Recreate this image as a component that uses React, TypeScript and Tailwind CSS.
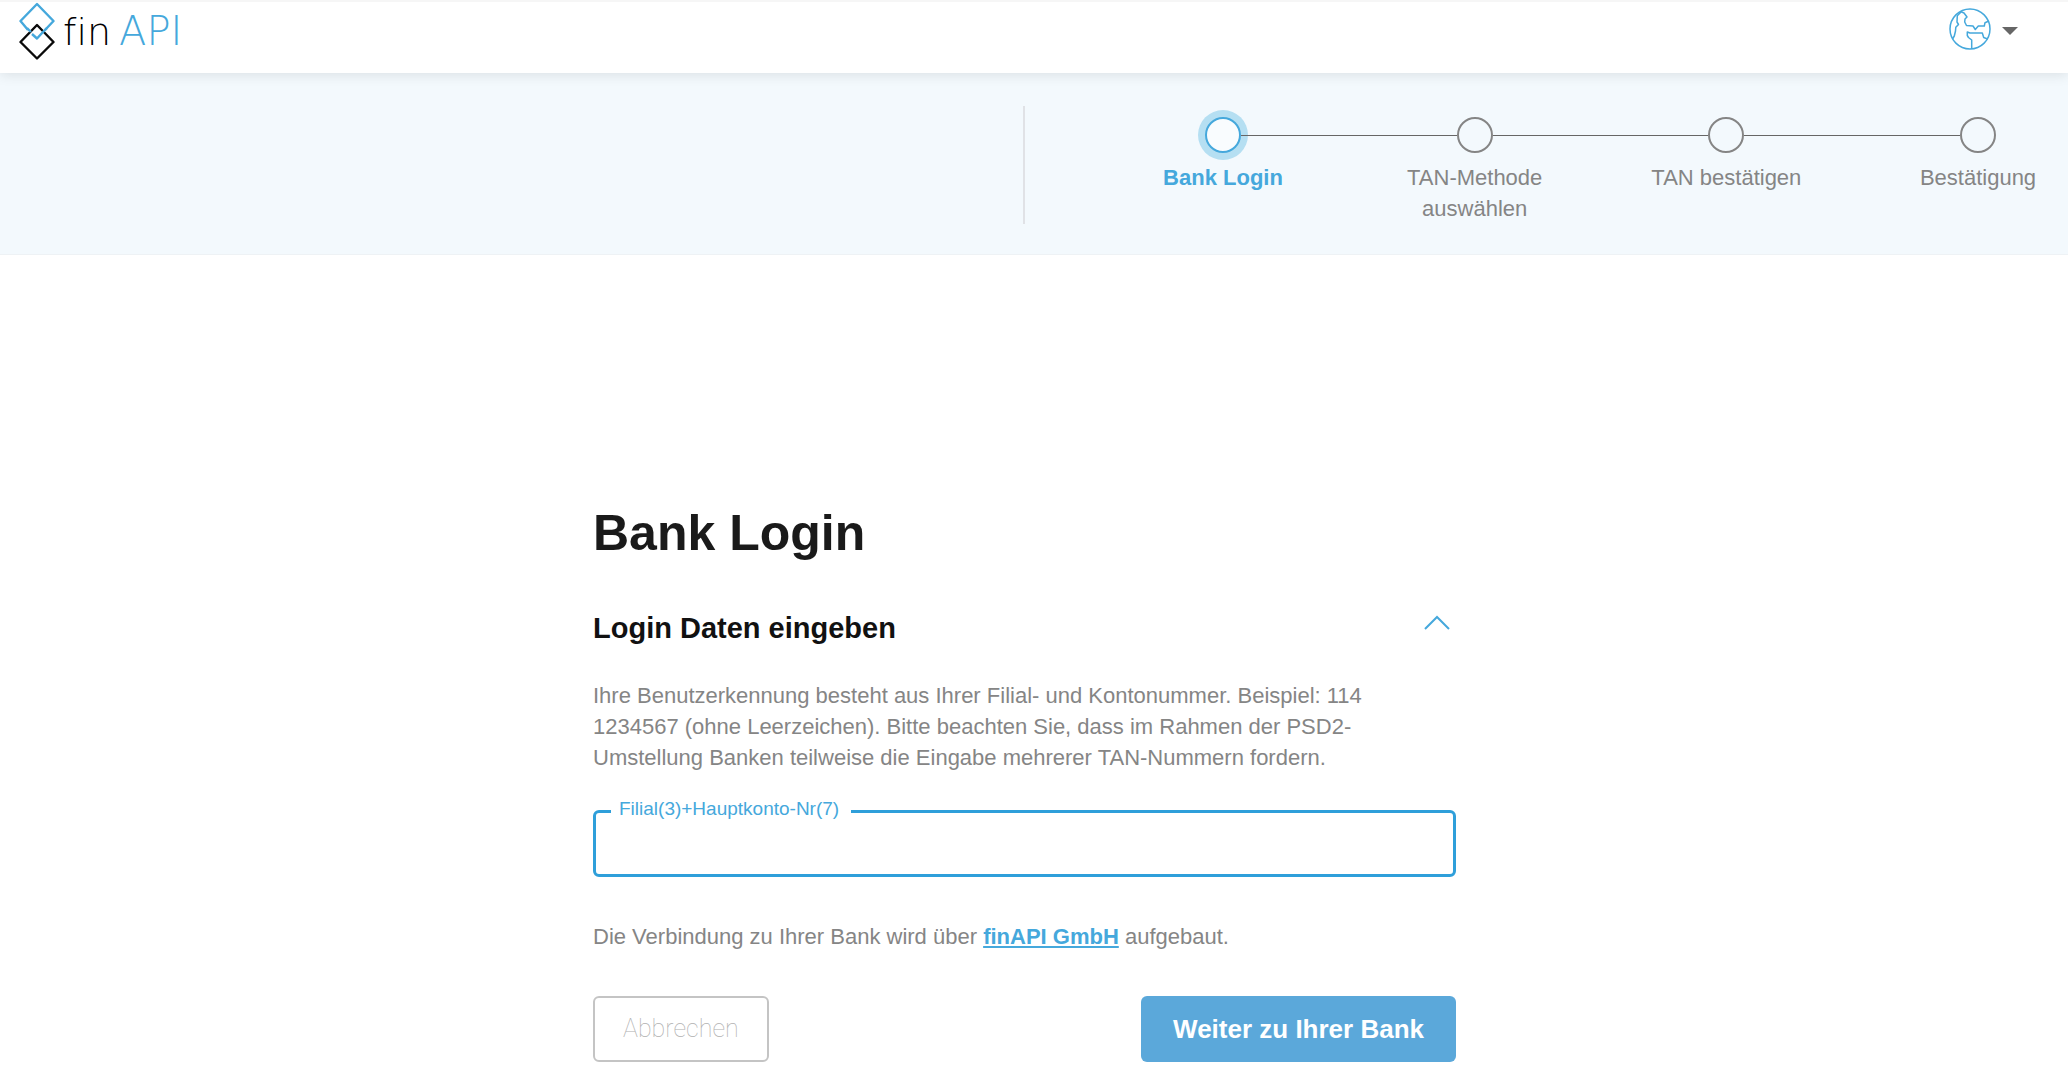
import React, { useState } from "react";

const steps = [
  { id: "login", label: "Bank Login" },
  { id: "method", label: "TAN-Methode auswählen" },
  { id: "tan", label: "TAN bestätigen" },
  { id: "confirm", label: "Bestätigung" },
];

function Logo() {
  return (
    <a href="#" className="flex items-center gap-2" aria-label="finAPI">
      <svg viewBox="0 0 36 58" fill="none" strokeWidth="2.4" strokeLinejoin="round" className="h-[58px] w-9">
        <path d="M9 28L1.5 19L18 2L34.5 19L26 28" stroke="#45a8dc" />
        <path d="M18 23L34.5 40L18 56.5L1.5 40Z" stroke="#0a0a0a" />
        <path d="M8 26L12 30M13 32L18 36.5L24 30L28 26" stroke="#45a8dc" />
      </svg>
      <span className="flex items-baseline gap-2 font-['DejaVu_Sans',sans-serif] leading-[48px] font-extralight [font-variant-ligatures:none]">
        <span className="text-[38px] text-black">fin</span>
        <span className="text-[40px] text-[#45a8dc]">API</span>
      </span>
    </a>
  );
}

function Globe() {
  return (
    <svg viewBox="0 0 42 42" fill="none" stroke="#45a8dc" strokeWidth="1.5" strokeLinejoin="round" className="size-[42px]">
      <circle cx="21" cy="21" r="20" />
      <path d="M11.5 3.5L15 5L18 9L16 11L15.7 14L17.5 17.5L24 18L26.3 21.5L29.3 18L35.3 18L36 14.7L39.3 13.3" />
      <path d="M12 4L8.3 7.7L8 14L9.5 16.5L6.8 19.3L6.5 23L5.3 28L3.5 31" />
      <path d="M22.7 41V32L19.5 29.5L18.3 27.5V24L21 25H33.3L34.7 29.5L38.5 31" />
    </svg>
  );
}

function Header() {
  return (
    <header className="relative z-10 flex h-[73px] items-start justify-between border-t-2 border-[#f6f6f6] bg-white pr-[50px] pl-[19px] shadow-[0_2px_12px_rgba(0,0,0,0.1)]">
      <Logo />
      <button type="button" aria-label="Sprache" className="mt-[6px] flex items-center gap-[11px]">
        <Globe />
        <span className="mt-1 border-x-8 border-t-8 border-x-transparent border-t-[#666666]" />
      </button>
    </header>
  );
}

function Stepper() {
  return (
    <div className="grid h-[182px] grid-cols-[1023fr_1045fr] border-b border-[#eef2f5] bg-[#f3f9fd] pt-[33px] pb-[33px]">
      <div />
      <ol className="flex items-start border-l-2 border-[#e0e2e6] pt-[11px] pr-[72px] pl-[180px]">
        {steps.map((step, i) => {
          const isActive = i === 0;
          return (
            <React.Fragment key={step.id}>
              {i > 0 && <li aria-hidden="true" className="mt-[18px] h-px flex-1 bg-[#666666]" />}
              <li className="flex w-9 flex-col items-center" aria-current={isActive ? "step" : undefined}>
                <span
                  className={`size-9 rounded-full border-2 ${isActive ? "border-[#45a8dc] bg-[#f9fcfe] ring-[7px] ring-[#b5dff2]" : "border-[#858585]"}`}
                />
                <span
                  className={`mt-[9px] w-[160px] text-center text-[22px] leading-[31px] ${isActive ? "font-bold text-[#45a8dc]" : "text-[#858585]"}`}
                >
                  {step.label}
                </span>
              </li>
            </React.Fragment>
          );
        })}
      </ol>
    </div>
  );
}

function LoginForm() {
  const [account, setAccount] = useState("");
  const [isOpen, setIsOpen] = useState(true);

  return (
    <form className="w-full max-w-[863px]" onSubmit={(e) => e.preventDefault()}>
      <h1 className="text-[50px] leading-[60px] font-bold text-[#1a1a1a]">Bank Login</h1>

      <div className="mt-[47px] flex items-start justify-between">
        <h2 className="text-[29px] leading-9 font-bold text-[#111111]">Login Daten eingeben</h2>
        <button
          type="button"
          aria-label="Login Daten"
          aria-expanded={isOpen}
          onClick={() => setIsOpen(!isOpen)}
          className="px-[5px] py-1"
        >
          <svg viewBox="0 0 28 18" fill="none" stroke="#45a8dc" strokeWidth="2" className="h-[18px] w-7">
            <path d={isOpen ? "M2 15L14 3L26 15" : "M2 3L14 15L26 3"} />
          </svg>
        </button>
      </div>

      {isOpen && (
        <>
          <p className="mt-[34px] pr-16 text-[22px] leading-[31px] text-[#858585]">
            Ihre Benutzerkennung besteht aus Ihrer Filial- und Kontonummer. Beispiel: 114 1234567 (ohne
            Leerzeichen). Bitte beachten Sie, dass im Rahmen der PSD2-Umstellung Banken teilweise die Eingabe
            mehrerer TAN-Nummern fordern.
          </p>

          <fieldset className="mt-6 h-20 rounded-md border-[3px] border-[#2f9fda] px-[15px]">
            <legend className="pr-3 pb-1 pl-2 text-[19px] leading-6 text-[#45a8dc]">
              <label htmlFor="account">Filial(3)+Hauptkonto-Nr(7)</label>
            </legend>
            <input
              id="account"
              type="text"
              value={account}
              onChange={(e) => setAccount(e.target.value)}
              className="h-10 w-full bg-transparent px-2 text-[22px] text-[#1a1a1a] outline-none"
            />
          </fieldset>
        </>
      )}

      <p className="mt-[44px] text-[22px] leading-[31px] text-[#858585]">
        Die Verbindung zu Ihrer Bank wird über{" "}
        <a href="#" className="font-bold text-[#45a8dc] underline">
          finAPI GmbH
        </a>{" "}
        aufgebaut.
      </p>

      <div className="mt-[44px] flex items-center justify-between">
        <button
          type="button"
          className="h-[66px] rounded-md border-2 border-[#c4c4c4] px-7 font-['Roboto','Liberation_Sans',sans-serif] text-[25px] font-thin text-[#b0b0b0]"
        >
          Abbrechen
        </button>
        <button type="submit" className="h-[66px] rounded-md bg-[#5ba8da] px-8 text-[26px] font-bold text-white">
          Weiter zu Ihrer Bank
        </button>
      </div>
    </form>
  );
}

export default function App() {
  return (
    <div className="min-h-screen bg-white font-['Liberation_Sans',Arial,sans-serif]">
      <Header />
      <Stepper />
      <main className="flex justify-center pt-[248px] pr-[19px] pb-7">
        <LoginForm />
      </main>
    </div>
  );
}
